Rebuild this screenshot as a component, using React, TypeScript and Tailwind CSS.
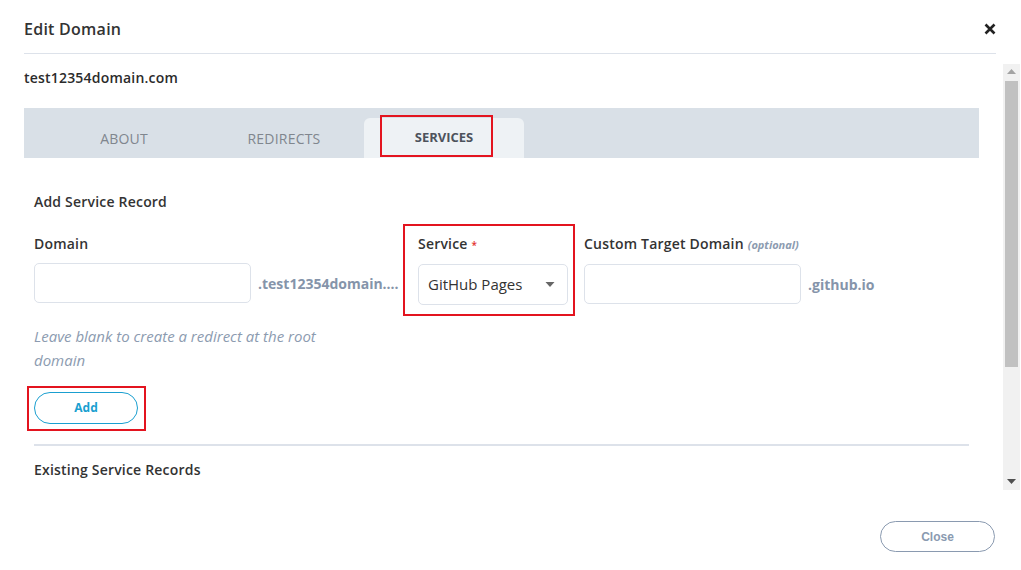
import React from "react";

export default function App() {
  const font = { fontFamily: '"Open Sans", "Liberation Sans", sans-serif' };
  return (
    <div className="w-[1021px] h-[570px] bg-white text-[#333] relative overflow-hidden" style={font}>
      {/* Header */}
      <div className="ml-6 mr-[25px] h-[54px] flex items-center justify-between border-b border-[#dde2ea]">
        <div className="text-[16px] font-semibold text-[#333] leading-[22px] mt-[4px] tracking-[0.25px]">Edit Domain</div>
        <svg width="12" height="12" viewBox="0 0 12 12" className="mt-[4px]">
          <path d="M1.5 1.5 L10.5 10.5 M10.5 1.5 L1.5 10.5" stroke="#222" strokeWidth="2.6" strokeLinecap="butt" />
        </svg>
      </div>

      {/* Body */}
      <div className="mt-[10px] h-[426px] flex">
        <div className="flex-1 pl-6 pr-6 pt-[5px] overflow-hidden">
          <div className="text-[14px] font-semibold leading-[18px] text-[#2b2b2b] tracking-[0.2px]">test12354domain.com</div>

          {/* Tabs */}
          <div className="mt-[21px] h-[50px] bg-[#d9e0e7] flex items-end pl-5">
            <div className="w-[160px] h-[40px] flex items-center justify-center text-[14px] text-[#80868e] tracking-[0.2px]">ABOUT</div>
            <div className="w-[160px] h-[40px] flex items-center justify-center text-[14px] text-[#80868e] tracking-[0.2px]">REDIRECTS</div>
            <div className="w-[160px] h-[40px] flex items-center justify-center text-[13px] font-bold text-[#4d525c] bg-[#eef2f5] rounded-t-[6px] relative">
              SERVICES
              <div className="absolute left-[16px] -top-[3px] w-[113px] h-[42px] border-2 border-[#e3141f]" />
            </div>
          </div>

          <div className="pl-[10px] pr-[10px]">
            <div className="mt-[35px] text-[14px] font-semibold leading-[18px] text-[#333] tracking-[0.2px]">Add Service Record</div>

            <div className="mt-[23px] flex gap-4">
              {/* Domain */}
              <div className="w-[368px]">
                <div className="text-[14px] font-semibold leading-[18px] text-[#333] tracking-[0.2px] pt-[1px]">Domain</div>
                <div className="mt-[10px] flex items-center">
                  <div className="w-[217px] h-[40px] border border-[#dde2ea] rounded-[5px] bg-white shrink-0" />
                  <div className="ml-[7px] text-[14px] font-bold text-[#8594aa] whitespace-nowrap">.test12354domain....</div>
                </div>
                <div className="mt-[21px] w-[330px] text-[15px] italic leading-[24px] text-[#8c9bb0]">
                  Leave blank to create a redirect at the root domain
                </div>
              </div>

              {/* Service */}
              <div className="w-[150px] relative">
                <div className="text-[14px] font-semibold leading-[18px] text-[#333] tracking-[0.2px] pt-[1px]">
                  Service<span className="text-[#e3342f] text-[10px] ml-[4px]">*</span>
                </div>
                <div className="mt-[10px] h-[41px] border border-[#dde2ea] rounded-[5px] bg-white flex items-center justify-between pl-[9px] pr-[12px]">
                  <span className="text-[15px] text-[#333]">GitHub Pages</span>
                  <svg width="10" height="6" viewBox="0 0 10 6">
                    <path d="M0.5 0 L9.5 0 L5 5 Z" fill="#666" />
                  </svg>
                </div>
                <div className="absolute -left-[15px] -top-[10px] w-[172px] h-[92px] border-2 border-[#e3141f]" />
              </div>

              {/* Custom Target */}
              <div className="flex-1">
                <div className="text-[14px] font-semibold leading-[18px] text-[#333] whitespace-nowrap tracking-[0.2px] pt-[1px]">
                  Custom Target Domain <span className="text-[11px] italic font-bold text-[#8c9bb0] tracking-normal">(optional)</span>
                </div>
                <div className="mt-[10px] flex items-center">
                  <div className="w-[217px] h-[40px] border border-[#dde2ea] rounded-[5px] bg-white shrink-0" />
                  <div className="ml-[7px] text-[14px] font-bold text-[#8594aa] whitespace-nowrap">.github.io</div>
                </div>
              </div>
            </div>

            <div className="mt-[20px] relative w-[104px]">
              <button className="w-[104px] h-[32px] rounded-full border border-[#1a9fd0] text-[#1a9fd0] text-[12px] font-bold bg-white">
                Add
              </button>
              <div className="absolute -left-[7px] -top-[6px] w-[119px] h-[45px] border-2 border-[#e3141f]" />
            </div>

            <div className="mt-[20px] h-[2px] bg-[#dde2ea]" />

            <div className="mt-[14px] text-[14px] font-semibold leading-[18px] text-[#333] tracking-[0.2px] pt-[1px]">Existing Service Records</div>
          </div>
        </div>

        {/* Scrollbar */}
        <div className="w-[17px] h-[426px] bg-[#f1f1f1] mr-[1px] flex flex-col items-center">
          <svg width="9" height="5" viewBox="0 0 9 5" className="mt-[5px]">
            <path d="M0 5 L9 5 L4.5 0 Z" fill="#a3a3a3" />
          </svg>
          <div className="mt-[7px] w-[13px] h-[286px] bg-[#c1c1c1]" />
          <div className="flex-1" />
          <svg width="9" height="5" viewBox="0 0 9 5" className="mb-[6px]">
            <path d="M0 0 L9 0 L4.5 5 Z" fill="#505050" />
          </svg>
        </div>
      </div>

      {/* Footer */}
      <div className="mt-[31px] flex justify-end pr-[26px]">
        <button
          className="w-[115px] h-[31px] rounded-full border border-[#8a9ab0] text-[#8a9ab0] text-[12px] font-bold bg-white"
          style={{ fontFamily: '"Liberation Sans", Arial, sans-serif' }}
        >
          Close
        </button>
      </div>
    </div>
  );
}
